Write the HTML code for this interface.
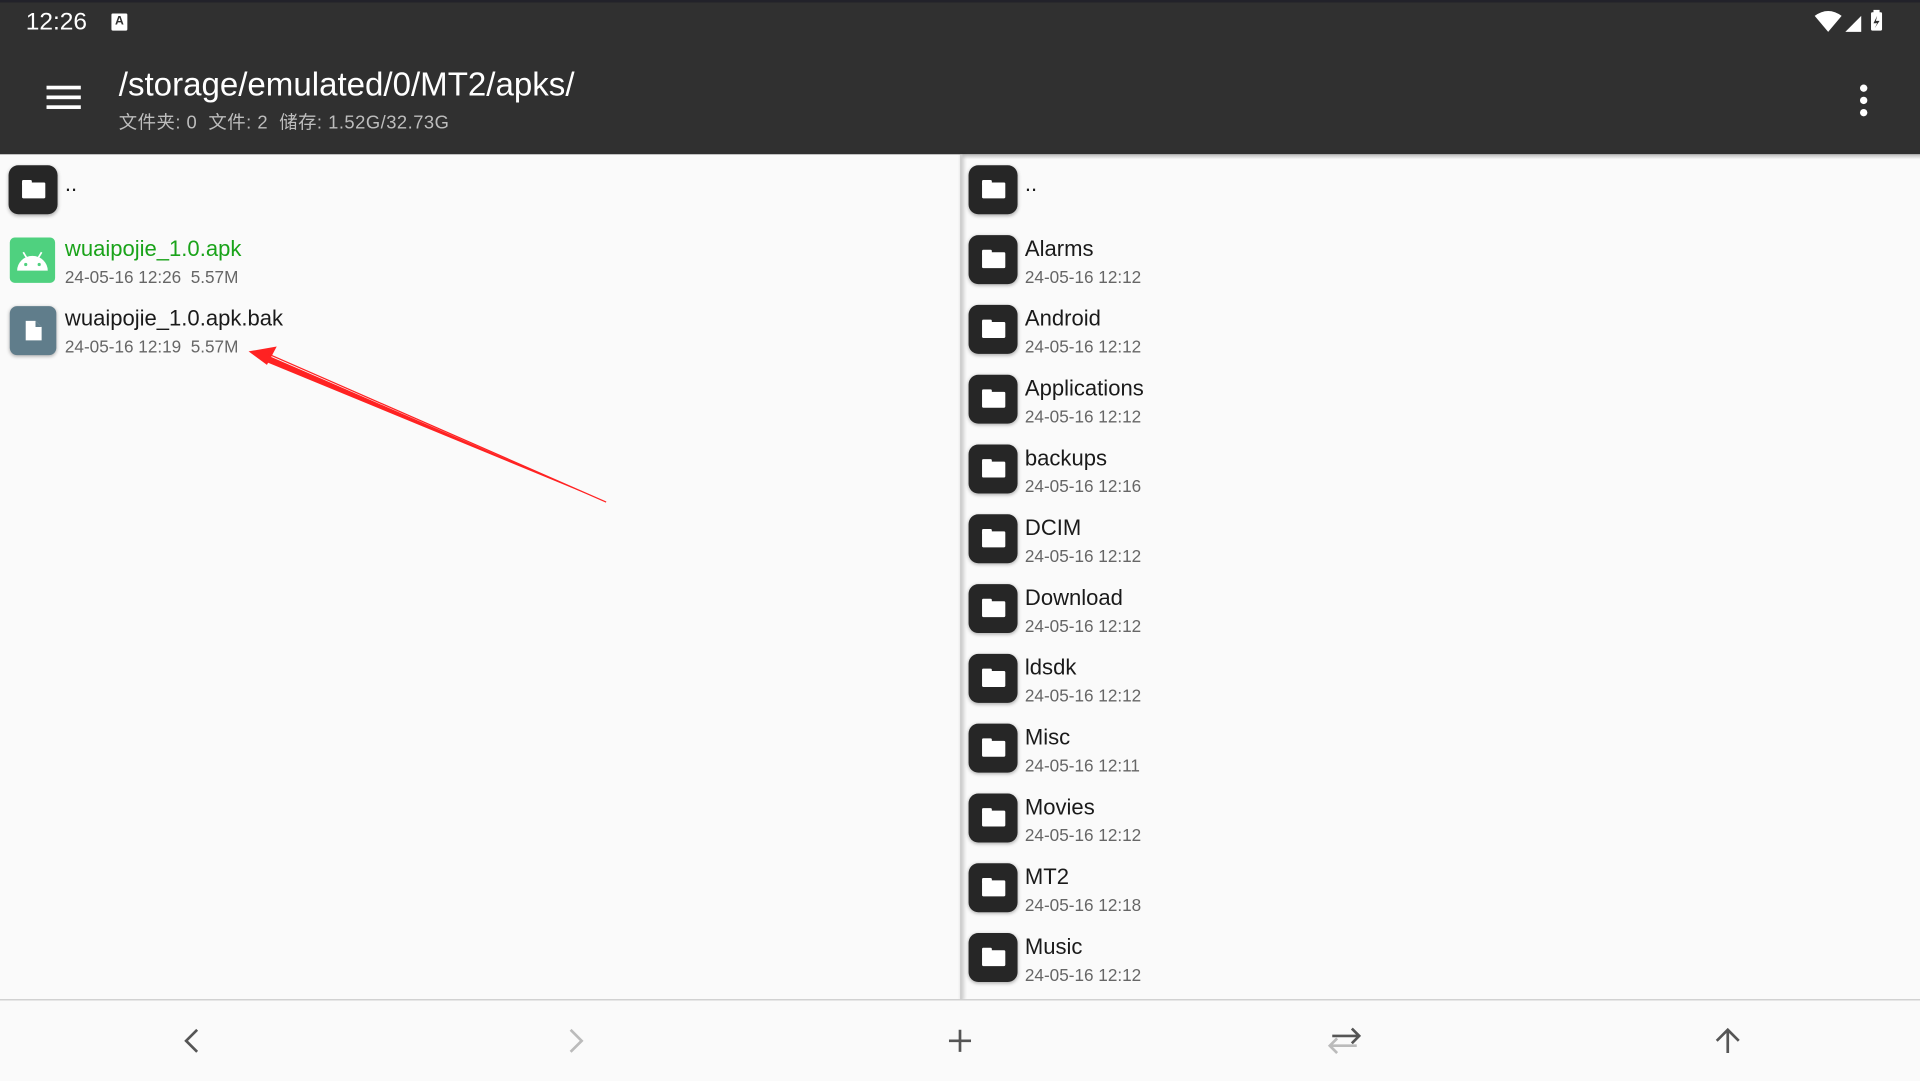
<!DOCTYPE html>
<html><head><meta charset="utf-8"><style>
html,body{margin:0;padding:0;width:1920px;height:1080px;overflow:hidden;background:#fafafa}
#w{position:absolute;left:0;top:0;width:1568px;height:882px;transform:scale(1.22449);transform-origin:0 0;font-family:"Liberation Sans","Noto Sans CJK SC",sans-serif;background:#fafafa}
.a{position:absolute}
.ic{position:absolute;width:40px;height:40px;border-radius:8px;background:#262626;box-shadow:0 1px 3px rgba(0,0,0,.3)}
.ic:before{content:"";position:absolute;left:11px;top:14px;width:19px;height:13px;background:#fff;border-radius:1px}
.ic:after{content:"";position:absolute;left:11px;top:12px;width:8px;height:4px;background:#fff;border-radius:1px 1px 0 0}
.n{position:absolute;font-size:18px;color:#1a1a1a;white-space:nowrap}
.d{position:absolute;font-size:14px;color:#666;white-space:nowrap}
</style></head><body><div id="w">
<div class="a" style="left:0;top:0;width:1568px;height:126px;background:#303030"></div>
<div class="a" style="left:0;top:0;width:1568px;height:2px;background:#22222a"></div>
<div class="a" style="left:21px;top:7px;font-size:20px;color:#fff">12:26</div>
<div class="a" style="left:91px;top:11px;width:13px;height:14px;background:#fff;border-radius:1px;font-size:10px;font-weight:bold;text-align:center;line-height:14px;color:#303030">A</div>
<svg class="a" style="left:1480px;top:8px" width="72" height="20"><path d="M2 5 Q13 -3 24 5 L13 18Z" fill="#fff"/><path d="M27 18 L40 5 L40 18Z" fill="#fff"/><rect x="48" y="2" width="9" height="15" rx="1" fill="#fff"/><rect x="50" y="0" width="5" height="3" fill="#fff"/><path d="M53 5 L50 11 L53 11 L51 15 L55 9 L52 9Z" fill="#303030"/></svg>
<div class="a" style="left:38px;top:70px;width:28px;height:3px;background:#fff;box-shadow:0 8px 0 #fff,0 16px 0 #fff"></div>
<div class="a" style="left:97px;top:54px;font-size:27px;color:#fff">/storage/emulated/0/MT2/apks/</div>
<div class="a" style="left:97px;top:89px;font-size:15px;letter-spacing:0.4px;color:#bdbdbd">文件夹: 0&nbsp; 文件: 2&nbsp; 储存: 1.52G/32.73G</div>
<div class="a" style="left:1519px;top:69px;width:6px;height:6px;border-radius:50%;background:#fff;box-shadow:0 10px 0 #fff,0 20px 0 #fff"></div>

<div class="a" style="left:784px;top:126px;width:2px;height:691px;background:#cfcfcf;box-shadow:1px 0 3px rgba(0,0,0,.25)"></div>
<div class="a" style="left:786px;top:126px;width:782px;height:4px;background:linear-gradient(#bbb,rgba(250,250,250,0))"></div>

<div class="ic" style="left:7px;top:135px"></div><div class="n" style="left:53px;top:140px">..</div>
<div class="a" style="left:8px;top:194px;width:37px;height:37px;border-radius:4px;background:#4fd17f"></div>
<svg class="a" style="left:8px;top:194px" width="37" height="37"><path d="M6 27 A12.5 12 0 0 1 31 27Z" fill="#fff"/><path d="M11 12l3 5M26 12l-3 5" stroke="#fff" stroke-width="1.4"/><circle cx="13" cy="22" r="1.3" fill="#4fd17f"/><circle cx="24" cy="22" r="1.3" fill="#4fd17f"/></svg>
<div class="n" style="left:53px;top:193px;color:#1aa31a">wuaipojie_1.0.apk</div>
<div class="d" style="left:53px;top:218px">24-05-16 12:26&nbsp; 5.57M</div>
<div class="a" style="left:8px;top:250px;width:38px;height:40px;border-radius:6px;background:#607d8b;box-shadow:0 1px 3px rgba(0,0,0,.3)"></div>
<svg class="a" style="left:8px;top:250px" width="38" height="40"><path d="M13 12 H21 L26 17 V28 H13Z" fill="#fff"/><path d="M21 12 V17 H26" fill="#607d8b"/></svg>
<div class="n" style="left:53px;top:250px">wuaipojie_1.0.apk.bak</div>
<div class="d" style="left:53px;top:275px">24-05-16 12:19&nbsp; 5.57M</div>
<svg class="a" style="left:0;top:0" width="600" height="420"><path d="M495 410 L218 290 L216 295Z" fill="#f22"/><path d="M203 287 L226 283 L218 298Z" fill="#f22"/><path d="M495 410 L219 289" stroke="#f22" stroke-width="1"/></svg>

<div class="ic" style="left:791px;top:135px"></div><div class="n" style="left:837px;top:140px">..</div>
<div class="ic" style="left:791px;top:192px"></div><div class="n" style="left:837px;top:193px">Alarms</div><div class="d" style="left:837px;top:218px">24-05-16 12:12</div>
<div class="ic" style="left:791px;top:249px"></div><div class="n" style="left:837px;top:250px">Android</div><div class="d" style="left:837px;top:275px">24-05-16 12:12</div>
<div class="ic" style="left:791px;top:306px"></div><div class="n" style="left:837px;top:307px">Applications</div><div class="d" style="left:837px;top:332px">24-05-16 12:12</div>
<div class="ic" style="left:791px;top:363px"></div><div class="n" style="left:837px;top:364px">backups</div><div class="d" style="left:837px;top:389px">24-05-16 12:16</div>
<div class="ic" style="left:791px;top:420px"></div><div class="n" style="left:837px;top:421px">DCIM</div><div class="d" style="left:837px;top:446px">24-05-16 12:12</div>
<div class="ic" style="left:791px;top:477px"></div><div class="n" style="left:837px;top:478px">Download</div><div class="d" style="left:837px;top:503px">24-05-16 12:12</div>
<div class="ic" style="left:791px;top:534px"></div><div class="n" style="left:837px;top:535px">ldsdk</div><div class="d" style="left:837px;top:560px">24-05-16 12:12</div>
<div class="ic" style="left:791px;top:591px"></div><div class="n" style="left:837px;top:592px">Misc</div><div class="d" style="left:837px;top:617px">24-05-16 12:11</div>
<div class="ic" style="left:791px;top:648px"></div><div class="n" style="left:837px;top:649px">Movies</div><div class="d" style="left:837px;top:674px">24-05-16 12:12</div>
<div class="ic" style="left:791px;top:705px"></div><div class="n" style="left:837px;top:706px">MT2</div><div class="d" style="left:837px;top:731px">24-05-16 12:18</div>
<div class="ic" style="left:791px;top:762px"></div><div class="n" style="left:837px;top:763px">Music</div><div class="d" style="left:837px;top:788px">24-05-16 12:12</div>

<div class="a" style="left:0;top:816px;width:1568px;height:66px;background:#fafafa;border-top:1px solid #c8c8c8"></div>
<svg class="a" style="left:0;top:830px" width="1568" height="40" fill="none" stroke-width="2.2">
<path d="M161 11 L152 20 L161 29" stroke="#555"/>
<path d="M466 11 L475 20 L466 29" stroke="#bbb"/>
<path d="M784 11 V29 M775 20 H793" stroke="#555"/>
<path d="M1088 16 H1110 M1104 10 L1110 16 L1104 22" stroke="#555"/>
<path d="M1108 24 H1086 M1092 18 L1086 24 L1092 30" stroke="#bbb"/>
<path d="M1411 30 V11 M1402 20 L1411 11 L1420 20" stroke="#555"/>
</svg>
</div></body></html>
